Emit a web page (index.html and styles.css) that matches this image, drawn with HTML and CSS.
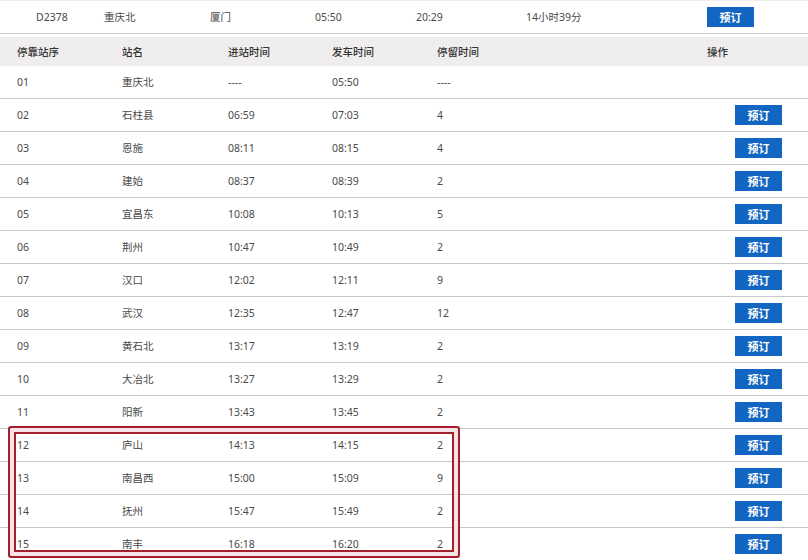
FILE: index.html
```html
<!DOCTYPE html>
<html lang="zh-CN">
<head>
<meta charset="utf-8">
<title>D2378 时刻表</title>
<link rel="stylesheet" href="styles.css">
</head>
<body>
<div class="page">
  <div class="train">
    <span>D2378</span>
    <span>重庆北</span>
    <span>厦门</span>
    <span>05:50</span>
    <span>20:29</span>
    <span>14小时39分</span>
    <span><button class="btn">预订</button></span>
  </div>
  <div class="table">
    <div class="row head">
      <span>停靠站序</span><span>站名</span><span>进站时间</span><span>发车时间</span><span>停留时间</span><span>操作</span>
    </div>
    <div class="row"><span>01</span><span>重庆北</span><span>----</span><span>05:50</span><span>----</span><span></span></div>
    <div class="row"><span>02</span><span>石柱县</span><span>06:59</span><span>07:03</span><span>4</span><span class="op"><button class="btn">预订</button></span></div>
    <div class="row"><span>03</span><span>恩施</span><span>08:11</span><span>08:15</span><span>4</span><span class="op"><button class="btn">预订</button></span></div>
    <div class="row"><span>04</span><span>建始</span><span>08:37</span><span>08:39</span><span>2</span><span class="op"><button class="btn">预订</button></span></div>
    <div class="row"><span>05</span><span>宜昌东</span><span>10:08</span><span>10:13</span><span>5</span><span class="op"><button class="btn">预订</button></span></div>
    <div class="row"><span>06</span><span>荆州</span><span>10:47</span><span>10:49</span><span>2</span><span class="op"><button class="btn">预订</button></span></div>
    <div class="row"><span>07</span><span>汉口</span><span>12:02</span><span>12:11</span><span>9</span><span class="op"><button class="btn">预订</button></span></div>
    <div class="row"><span>08</span><span>武汉</span><span>12:35</span><span>12:47</span><span>12</span><span class="op"><button class="btn">预订</button></span></div>
    <div class="row"><span>09</span><span>黄石北</span><span>13:17</span><span>13:19</span><span>2</span><span class="op"><button class="btn">预订</button></span></div>
    <div class="row"><span>10</span><span>大冶北</span><span>13:27</span><span>13:29</span><span>2</span><span class="op"><button class="btn">预订</button></span></div>
    <div class="row"><span>11</span><span>阳新</span><span>13:43</span><span>13:45</span><span>2</span><span class="op"><button class="btn">预订</button></span></div>
    <div class="row"><span>12</span><span>庐山</span><span>14:13</span><span>14:15</span><span>2</span><span class="op"><button class="btn">预订</button></span></div>
    <div class="row"><span>13</span><span>南昌西</span><span>15:00</span><span>15:09</span><span>9</span><span class="op"><button class="btn">预订</button></span></div>
    <div class="row"><span>14</span><span>抚州</span><span>15:47</span><span>15:49</span><span>2</span><span class="op"><button class="btn">预订</button></span></div>
    <div class="row"><span>15</span><span>南丰</span><span>16:18</span><span>16:20</span><span>2</span><span class="op"><button class="btn">预订</button></span></div>
  </div>
  <div class="highlight"></div>
</div>
</body>
</html>
```

FILE: styles.css
```css
* { box-sizing: border-box; }
html, body { margin: 0; padding: 0; background: #fff; }
body {
  font-family: "Noto Sans", "Noto Sans CJK SC", sans-serif;
  font-size: 10.5px;
  color: #4a4a4a;
  width: 808px;
  height: 560px;
  overflow: hidden;
}
.page { position: relative; }
.train {
  display: grid;
  grid-template-columns: 68px 106px 105px 101px 110px 181px 1fr;
  align-items: center;
  height: 34px;
  padding-left: 36px;
  padding-bottom: 1px;
  border-bottom: 1px solid #cfcfcf;
  border-top: 1px solid #eeeeee;
}
.table { margin-top: 3px; }
.row {
  display: grid;
  grid-template-columns: 105px 106px 104px 105px 270px 1fr;
  align-items: center;
  height: 33px;
  padding-left: 17px;
  padding-bottom: 1px;
  border-bottom: 1px solid #c9c9c9;
}
.row.head {
  height: 29px;
  background: #efeded;
  border-bottom: none;
  color: #333;
  font-weight: 500;
}
.op { padding-left: 28px; }
.btn {
  display: block;
  width: 47px;
  height: 20px;
  border: none;
  padding: 0;
  background: #1266c2;
  color: #fff;
  font-family: "Noto Sans CJK SC", sans-serif;
  font-size: 11px;
  font-weight: 700;
  line-height: 20px;
  text-align: center;
}
.highlight {
  position: absolute;
  left: 8px;
  top: 426px;
  width: 452px;
  height: 132px;
  border: 2px solid #a31f2c;
  border-radius: 3px;
  box-shadow: inset 0 0 0 4px #f7e4e6, inset 0 0 0 6px #a31f2c;
}
```
